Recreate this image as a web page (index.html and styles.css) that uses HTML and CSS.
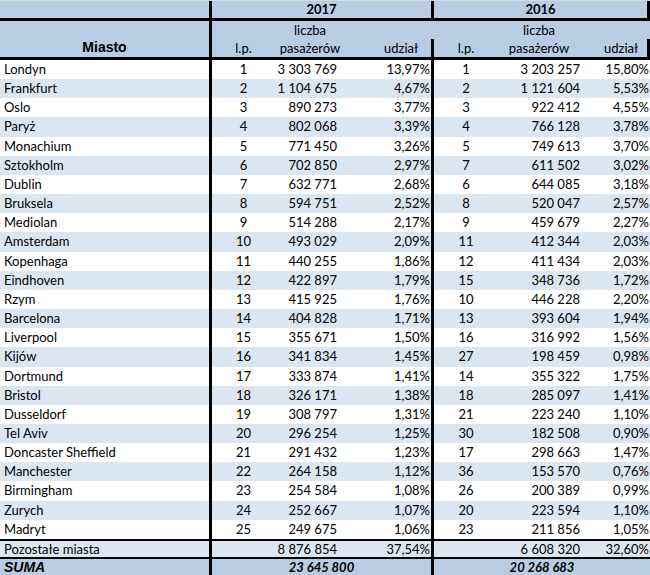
FILE: index.html
```html
<!DOCTYPE html>
<html lang="pl">
<head>
<meta charset="utf-8">
<title>Pasażerowie</title>
<link rel="stylesheet" href="styles.css">
</head>
<body>
<div class="sheet">
  <div class="row hdr1">
    <div class="c city"></div>
    <div class="c year">2017</div>
    <div class="c year edge">2016</div>
  </div>
  <div class="row hdr2">
    <div class="c city miasto">Miasto</div>
    <div class="c lp h">l.p.</div>
    <div class="c h two a17">liczba<br>pasażerów</div>
    <div class="c h ud17 grp">udział</div>
    <div class="c lp h">l.p.</div>
    <div class="c h two a16">liczba<br>pasażerów</div>
    <div class="c h ud16 edge">udział</div>
  </div>
  <div class="body">
    <div class="row d"><div class="c city">Londyn</div><div class="c lp">1</div><div class="c n">3 303 769</div><div class="c p grp">13,97%</div><div class="c lp">1</div><div class="c n">3 203 257</div><div class="c p">15,80%</div></div>
    <div class="row d"><div class="c city">Frankfurt</div><div class="c lp">2</div><div class="c n">1 104 675</div><div class="c p grp">4,67%</div><div class="c lp">2</div><div class="c n">1 121 604</div><div class="c p">5,53%</div></div>
    <div class="row d"><div class="c city">Oslo</div><div class="c lp">3</div><div class="c n">890 273</div><div class="c p grp">3,77%</div><div class="c lp">3</div><div class="c n">922 412</div><div class="c p">4,55%</div></div>
    <div class="row d"><div class="c city">Paryż</div><div class="c lp">4</div><div class="c n">802 068</div><div class="c p grp">3,39%</div><div class="c lp">4</div><div class="c n">766 128</div><div class="c p">3,78%</div></div>
    <div class="row d"><div class="c city">Monachium</div><div class="c lp">5</div><div class="c n">771 450</div><div class="c p grp">3,26%</div><div class="c lp">5</div><div class="c n">749 613</div><div class="c p">3,70%</div></div>
    <div class="row d"><div class="c city">Sztokholm</div><div class="c lp">6</div><div class="c n">702 850</div><div class="c p grp">2,97%</div><div class="c lp">7</div><div class="c n">611 502</div><div class="c p">3,02%</div></div>
    <div class="row d"><div class="c city">Dublin</div><div class="c lp">7</div><div class="c n">632 771</div><div class="c p grp">2,68%</div><div class="c lp">6</div><div class="c n">644 085</div><div class="c p">3,18%</div></div>
    <div class="row d"><div class="c city">Bruksela</div><div class="c lp">8</div><div class="c n">594 751</div><div class="c p grp">2,52%</div><div class="c lp">8</div><div class="c n">520 047</div><div class="c p">2,57%</div></div>
    <div class="row d"><div class="c city">Mediolan</div><div class="c lp">9</div><div class="c n">514 288</div><div class="c p grp">2,17%</div><div class="c lp">9</div><div class="c n">459 679</div><div class="c p">2,27%</div></div>
    <div class="row d"><div class="c city">Amsterdam</div><div class="c lp">10</div><div class="c n">493 029</div><div class="c p grp">2,09%</div><div class="c lp">11</div><div class="c n">412 344</div><div class="c p">2,03%</div></div>
    <div class="row d"><div class="c city">Kopenhaga</div><div class="c lp">11</div><div class="c n">440 255</div><div class="c p grp">1,86%</div><div class="c lp">12</div><div class="c n">411 434</div><div class="c p">2,03%</div></div>
    <div class="row d"><div class="c city">Eindhoven</div><div class="c lp">12</div><div class="c n">422 897</div><div class="c p grp">1,79%</div><div class="c lp">15</div><div class="c n">348 736</div><div class="c p">1,72%</div></div>
    <div class="row d"><div class="c city">Rzym</div><div class="c lp">13</div><div class="c n">415 925</div><div class="c p grp">1,76%</div><div class="c lp">10</div><div class="c n">446 228</div><div class="c p">2,20%</div></div>
    <div class="row d"><div class="c city">Barcelona</div><div class="c lp">14</div><div class="c n">404 828</div><div class="c p grp">1,71%</div><div class="c lp">13</div><div class="c n">393 604</div><div class="c p">1,94%</div></div>
    <div class="row d"><div class="c city">Liverpool</div><div class="c lp">15</div><div class="c n">355 671</div><div class="c p grp">1,50%</div><div class="c lp">16</div><div class="c n">316 992</div><div class="c p">1,56%</div></div>
    <div class="row d"><div class="c city">Kijów</div><div class="c lp">16</div><div class="c n">341 834</div><div class="c p grp">1,45%</div><div class="c lp">27</div><div class="c n">198 459</div><div class="c p">0,98%</div></div>
    <div class="row d"><div class="c city">Dortmund</div><div class="c lp">17</div><div class="c n">333 874</div><div class="c p grp">1,41%</div><div class="c lp">14</div><div class="c n">355 322</div><div class="c p">1,75%</div></div>
    <div class="row d"><div class="c city">Bristol</div><div class="c lp">18</div><div class="c n">326 171</div><div class="c p grp">1,38%</div><div class="c lp">18</div><div class="c n">285 097</div><div class="c p">1,41%</div></div>
    <div class="row d"><div class="c city">Dusseldorf</div><div class="c lp">19</div><div class="c n">308 797</div><div class="c p grp">1,31%</div><div class="c lp">21</div><div class="c n">223 240</div><div class="c p">1,10%</div></div>
    <div class="row d"><div class="c city">Tel Aviv</div><div class="c lp">20</div><div class="c n">296 254</div><div class="c p grp">1,25%</div><div class="c lp">30</div><div class="c n">182 508</div><div class="c p">0,90%</div></div>
    <div class="row d"><div class="c city">Doncaster Sheffield</div><div class="c lp">21</div><div class="c n">291 432</div><div class="c p grp">1,23%</div><div class="c lp">17</div><div class="c n">298 663</div><div class="c p">1,47%</div></div>
    <div class="row d"><div class="c city">Manchester</div><div class="c lp">22</div><div class="c n">264 158</div><div class="c p grp">1,12%</div><div class="c lp">36</div><div class="c n">153 570</div><div class="c p">0,76%</div></div>
    <div class="row d"><div class="c city">Birmingham</div><div class="c lp">23</div><div class="c n">254 584</div><div class="c p grp">1,08%</div><div class="c lp">26</div><div class="c n">200 389</div><div class="c p">0,99%</div></div>
    <div class="row d"><div class="c city">Zurych</div><div class="c lp">24</div><div class="c n">252 667</div><div class="c p grp">1,07%</div><div class="c lp">20</div><div class="c n">223 594</div><div class="c p">1,10%</div></div>
    <div class="row d"><div class="c city">Madryt</div><div class="c lp">25</div><div class="c n">249 675</div><div class="c p grp">1,06%</div><div class="c lp">23</div><div class="c n">211 856</div><div class="c p">1,05%</div></div>
  </div>
  <div class="row rest">
    <div class="c city">Pozostałe miasta</div><div class="c lp"></div><div class="c n">8 876 854</div><div class="c p grp">37,54%</div><div class="c lp"></div><div class="c n">6 608 320</div><div class="c p">32,60%</div>
  </div>
  <div class="row sum">
    <div class="c city suma">SUMA</div>
    <div class="c tot grp">23 645 800</div>
    <div class="c tot">20 268 683</div>
  </div>
</div>
</body>
</html>
```
FILE: styles.css
```css
html, body {
  margin: 0;
  padding: 0;
  background: #ffffff;
}
.sheet {
  width: 650px;
  height: 575px;
  overflow: hidden;
  font-family: "Lato", "Liberation Sans", sans-serif;
  font-size: 13px;
  color: #000;
}
.row {
  display: grid;
  grid-template-columns: 212px 63px 70px 89px 64px 90px 62px;
  box-sizing: border-box;
}
.c {
  box-sizing: border-box;
  white-space: nowrap;
  overflow: visible;
}
.city {
  border-right: 3px solid #000;
  padding-left: 4px;
}
.grp {
  border-right: 3px solid #000;
}
.edge {
  border-right: 3px solid #000;
}
.hdr1 {
  background: #b8cce4;
  height: 21px;
  border-top: 1px solid #d9d9d9;
  border-bottom: 3px solid #000;
}
.year {
  grid-column: span 3;
  text-align: center;
  font-weight: 700;
  line-height: 17px;
  border-right: 3px solid #000;
}
.hdr2 {
  background: #b8cce4;
  height: 39px;
  border-bottom: 3px solid #000;
  line-height: 18px;
}
.h {
  align-self: end;
  padding-bottom: 1px;
}
.miasto {
  align-self: stretch;
  display: flex;
  align-items: flex-end;
  justify-content: center;
  padding-left: 0;
  padding-bottom: 2px;
  font-family: "Liberation Sans", Arial, sans-serif;
  font-weight: 700;
  font-size: 14px;
}
.lp {
  text-align: center;
}
.two {
  text-align: center;
}
.a16 {
  padding-right: 8px;
}
.ud17 {
  text-align: right;
  padding-right: 13px;
}
.ud16 {
  text-align: right;
  padding-right: 9px;
}
.body {
  display: flex;
  flex-direction: column;
}
.d {
  height: 19.16px;
  line-height: 19px;
}
.d:nth-child(even) {
  background: #dce6f1;
}
.n {
  text-align: right;
  padding-right: 8px;
}
.p {
  text-align: right;
  padding-right: 1px;
}
.rest {
  background: #dce6f1;
  height: 20px;
  line-height: 16px;
  border-top: 2px solid #000;
  border-bottom: 2px solid #000;
}
.sum {
  background: #b8cce4;
  grid-template-columns: 212px 222px 216px;
  height: 18px;
  line-height: 17px;
  font-weight: 700;
  font-style: italic;
}
.suma {
  font-family: "Liberation Sans", Arial, sans-serif;
  font-size: 14px;
}
.tot {
  text-align: center;
}
```
